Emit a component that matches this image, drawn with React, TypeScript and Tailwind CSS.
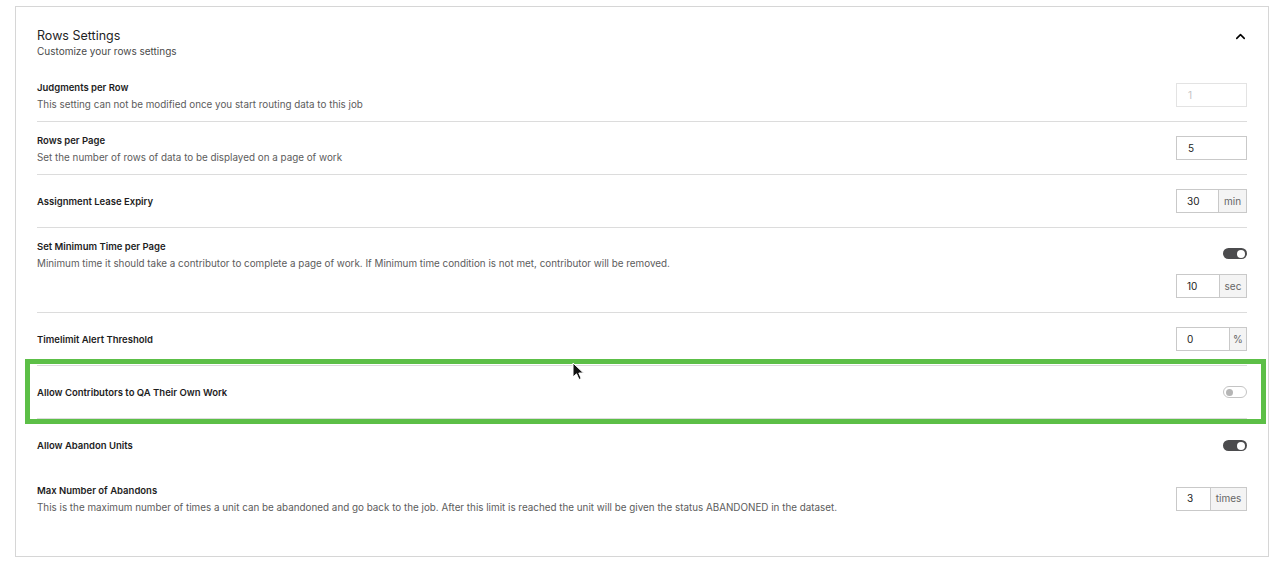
import { ChevronUp } from "lucide-react";

type Row = {
    label: string;
    desc?: string;
    kind: "input" | "toggle" | "toggle-input";
    value?: string;
    unit?: string;
    inputW?: string;
    on?: boolean;
    disabled?: boolean;
    border?: boolean;
};

const rows: Row[] = [
    { label: "Judgments per Row", desc: "This setting can not be modified once you start routing data to this job", kind: "input", value: "1", disabled: true, border: true },
    { label: "Rows per Page", desc: "Set the number of rows of data to be displayed on a page of work", kind: "input", value: "5", border: true },
    { label: "Assignment Lease Expiry", kind: "input", value: "30", unit: "min", inputW: "w-[42px]", border: true },
    { label: "Set Minimum Time per Page", desc: "Minimum time it should take a contributor to complete a page of work. If Minimum time condition is not met, contributor will be removed.", kind: "toggle-input", value: "10", unit: "sec", inputW: "w-[43px]", on: true, border: true },
    { label: "Timelimit Alert Threshold", kind: "input", value: "0", unit: "%", inputW: "w-[53px]", border: true },
    { label: "Allow Contributors to QA Their Own Work", kind: "toggle", on: false, border: true },
    { label: "Allow Abandon Units", kind: "toggle", on: true },
    { label: "Max Number of Abandons", desc: "This is the maximum number of times a unit can be abandoned and go back to the job. After this limit is reached the unit will be given the status ABANDONED in the dataset.", kind: "input", value: "3", unit: "times", inputW: "w-[34px]" },
];

function Toggle({ on }: { on?: boolean }) {
    if (on) {
        return (
            <div className="w-[24px] h-[11px] rounded-full bg-[#4b4b4d] flex items-center justify-end pr-[2px]">
                <div className="w-[8px] h-[8px] rounded-full bg-white" />
            </div>
        );
    }
    return (
        <div className="w-[24px] h-[12px] rounded-full bg-white border border-[#c4c4c4] flex items-center pl-[2px]">
            <div className="w-[7px] h-[7px] rounded-full bg-[#b5b5b5]" />
        </div>
    );
}

function NumberField({ row }: { row: Row }) {
    if (!row.unit) {
        return (
            <div
                className={`w-[71px] h-[24px] flex items-center pl-[11px] text-[10px] border ${
                    row.disabled ? "border-[#e3e3e3] text-[#c4c4c4]" : "border-[#c9c9c9] text-[#222]"
                }`}
            >
                {row.value}
            </div>
        );
    }
    return (
        <div className="w-[71px] h-[24px] flex border border-[#c9c9c9] text-[10px]">
            <div className={`${row.inputW} flex items-center pl-[10px] text-[#222] border-r border-[#c9c9c9]`}>{row.value}</div>
            <div className="flex-1 flex items-center justify-center bg-[#f4f4f4] text-[#666]">{row.unit}</div>
        </div>
    );
}

function SettingRow({ row }: { row: Row }) {
    const tall = row.kind === "toggle-input";
    return (
        <div
            className={`flex justify-between ${tall ? "h-[85px]" : "h-[53px]"} ${
                row.border ? "border-b border-[#dcdcdc]" : ""
            }`}
        >
            <div className={`flex flex-col ${tall ? "pt-[13px]" : "justify-center pt-[1px]"}`}>
                <div className="text-[9.5px] font-semibold text-[#1d1d1d] leading-[12px]">{row.label}</div>
                {row.desc && <div className="text-[9.85px] text-[#5c5c5c] leading-[12px] mt-[4px]">{row.desc}</div>}
            </div>
            <div className={`flex flex-col items-end ${tall ? "" : "justify-center"}`}>
                {row.kind === "input" && <NumberField row={row} />}
                {row.kind === "toggle" && <Toggle on={row.on} />}
                {row.kind === "toggle-input" && (
                    <>
                        <div className="mt-[20px] mb-[15px]">
                            <Toggle on={row.on} />
                        </div>
                        <NumberField row={row} />
                    </>
                )}
            </div>
        </div>
    );
}

export default function App() {
    return (
        <div className="w-[1278px] h-[565px] bg-white pt-[6px] pl-[15px] font-['Inter',sans-serif] relative">
            <div className="w-[1254px] h-[551px] border border-[#d6d6d6] px-[21px] pt-[20px]">
                {/* Header */}
                <div className="flex justify-between items-start mb-[12px]">
                    <div>
                        <h2 className="text-[12.5px] text-[#1f1f1f] leading-[16px] pt-[1px]">Rows Settings</h2>
                        <p className="text-[10px] text-[#4a4a4a] leading-[12px] mt-[1px]">Customize your rows settings</p>
                    </div>
                    <ChevronUp size={15} strokeWidth={2.5} className="text-black mt-[2px] -mr-[1px]" />
                </div>

                {rows.map((row) => (
                    <SettingRow key={row.label} row={row} />
                ))}
            </div>

            {/* highlight annotation */}
            <div className="absolute left-[25px] top-[359px] w-[1241px] h-[65px] border-[5px] border-[#5cbf47] pointer-events-none" />

            {/* mouse pointer */}
            <svg className="absolute left-[572px] top-[362px]" width="13" height="20" viewBox="0 0 13 20">
                <path d="M1 1 L1 15 L4.5 11.8 L7 17.5 L9.2 16.5 L6.8 11 L11.5 11 Z" fill="#111" stroke="#fff" strokeWidth="1" strokeLinejoin="round" />
            </svg>
        </div>
    );
}
